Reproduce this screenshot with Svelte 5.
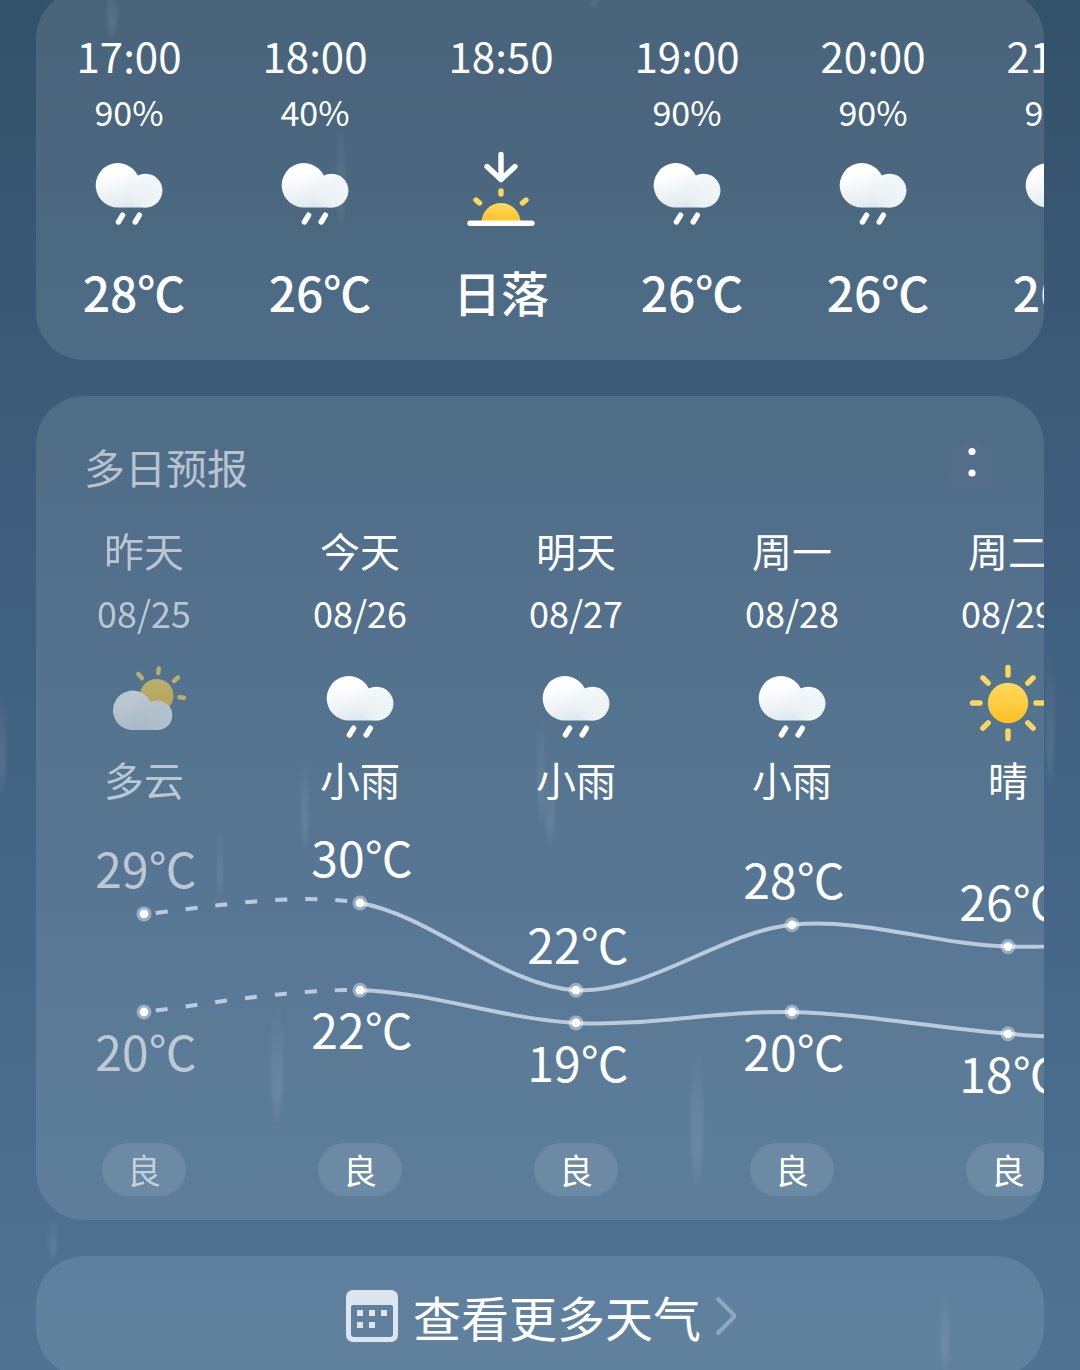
<script>
  const hours = [
    { time: '17:00', rain: '90%', icon: 'rain', label: '28℃' },
    { time: '18:00', rain: '40%', icon: 'rain', label: '26℃' },
    { time: '18:50', rain: '', icon: 'sunset', label: '日落' },
    { time: '19:00', rain: '90%', icon: 'rain', label: '26℃' },
    { time: '20:00', rain: '90%', icon: 'rain', label: '26℃' },
    { time: '21:00', rain: '90%', icon: 'rain', label: '26℃' }
  ];

  const days = [
    { name: '昨天', date: '08/25', icon: 'partly', sky: '多云', high: 29, low: 20, air: '良', past: true },
    { name: '今天', date: '08/26', icon: 'rain', sky: '小雨', high: 30, low: 22, air: '良' },
    { name: '明天', date: '08/27', icon: 'rain', sky: '小雨', high: 22, low: 19, air: '良' },
    { name: '周一', date: '08/28', icon: 'rain', sky: '小雨', high: 28, low: 20, air: '良' },
    { name: '周二', date: '08/29', icon: 'sun', sky: '晴', high: 26, low: 18, air: '良' },
    { name: '周三', date: '08/30', icon: 'sun', sky: '晴', high: 27, low: 17, air: '良' }
  ];

  const COL = 216;
  const CHART_H = 334;
  const peak = Math.max(...days.map((d) => d.high));
  const yOf = (t) => 94 + (peak - t) * 10.9;
  const toPoints = (key) => days.map((d, i) => ({ x: COL * (i + 0.5), y: yOf(d[key]), t: d[key], past: d.past }));

  // Catmull-Rom spline through the points, one cubic segment per pair.
  function segments(pts) {
    return pts.slice(0, -1).map((p, i) => {
      const q = pts[i + 1];
      const before = pts[i - 1] ?? p;
      const after = pts[i + 2] ?? q;
      const c1 = [p.x + (q.x - before.x) / 6, p.y + (q.y - before.y) / 6];
      const c2 = [q.x - (after.x - p.x) / 6, q.y - (after.y - p.y) / 6];
      return { start: `M${p.x} ${p.y}`, curve: `C${c1} ${c2} ${q.x} ${q.y}` };
    });
  }

  function series(key, labelShift) {
    const pts = toPoints(key);
    const segs = segments(pts);
    return {
      pts,
      labelShift,
      dashed: segs[0].start + segs[0].curve,
      solid: segs[1].start + segs.slice(1).map((s) => s.curve).join('')
    };
  }

  const lines = [series('high', -26), series('low', 59)];

  const drops = [
    { x: 112, y: 10, h: 60, w: 10 },
    { x: 594, y: 0, h: 16, w: 8 },
    { x: 341, y: 175, h: 100, w: 9 },
    { x: 541, y: 770, h: 110, w: 8 },
    { x: 550, y: 805, h: 80, w: 10 },
    { x: 305, y: 800, h: 100, w: 8 },
    { x: 220, y: 860, h: 70, w: 6 },
    { x: 277, y: 1060, h: 124, w: 13 },
    { x: 697, y: 1112, h: 150, w: 13 },
    { x: 53, y: 1238, h: 48, w: 8 },
    { x: 945, y: 1330, h: 80, w: 9 },
    { x: 1050, y: 715, h: 140, w: 9 },
    { x: 2, y: 740, h: 110, w: 8 }
  ];
</script>

<svelte:head>
  <title>天气</title>
</svelte:head>

{#snippet weatherIcon(kind)}
  <svg class="icon" viewBox="0 0 90 90" aria-hidden="true">
    {#if kind === 'rain'}
      <path fill="url(#cloud)" d="M33.6 61.5A22.2 22.2 0 1 1 53.9 29.6A16.9 16.9 0 1 1 60.6 61.5Z" />
      <circle cx="60.6" cy="44.8" r="16.8" fill="url(#lobe)" />
      <path class="drop" d="M34.4 76L38.6 69.2M51.2 76L55.4 69.2" />
    {:else if kind === 'sunset'}
      <path class="arrow" d="M45 8.5V33M31 20.5L45 33.5L59 20.5" />
      <path class="ray" d="M45 45V48M20 54L23.5 57M70 54L66.5 57" />
      <path fill="url(#sun)" d="M25.5 76.5a19.5 19.5 0 0 1 39 0Z" />
      <path class="arrow" d="M14 77.3H76" />
    {:else if kind === 'sun'}
      <circle cx="45" cy="44" r="20.2" fill="url(#sun)" />
      {#each [0, 45, 90, 135, 180, 225, 270, 315] as angle}
        <path class="ray" d="M45 8.5V16" transform="rotate({angle} 45 44)" />
      {/each}
    {:else}
      <circle cx="57.7" cy="36.7" r="16.8" fill="url(#sun)" />
      <path class="ray thin" d="M59.8 9.5L59.3 14M39.3 15L43 19.2M79 18.5L75 22M80.5 38.3L85 38.8" />
      <path fill="url(#cloud)" d="M33.7 71A19.7 19.7 0 1 1 51.6 43.1A14.8 14.8 0 1 1 58.3 71Z" />
      <circle cx="58.3" cy="56.2" r="14.7" fill="url(#lobe)" />
    {/if}
  </svg>
{/snippet}

<div class="screen">
  <svg class="rainfall" viewBox="0 0 1080 1370" preserveAspectRatio="xMidYMin slice" aria-hidden="true">
    <defs>
      <linearGradient id="streak" x2="0" y2="1">
        <stop offset="0" stop-color="#fff" stop-opacity="0" />
        <stop offset=".75" stop-color="#cfe4f5" stop-opacity=".1" />
        <stop offset="1" stop-color="#cfe4f5" stop-opacity=".03" />
      </linearGradient>
      <linearGradient id="cloud" x1="0" y1="0" x2=".4" y2="1">
        <stop offset=".3" stop-color="#fff" />
        <stop offset="1" stop-color="#dfe9ee" />
      </linearGradient>
      <linearGradient id="lobe" x1="0" y1=".3" x2="1" y2=".6">
        <stop offset="0" stop-color="#f6f9fa" stop-opacity="0" />
        <stop offset="1" stop-color="#f0f5f7" />
      </linearGradient>
      <linearGradient id="sun" x2="0" y2="1">
        <stop offset="0" stop-color="#ffda60" />
        <stop offset="1" stop-color="#fcc024" />
      </linearGradient>
      <filter id="soften" x="-1" width="3">
        <feGaussianBlur stdDeviation="1.5" />
      </filter>
    </defs>
    {#each drops as d}
      <ellipse cx={d.x} cy={d.y} rx={d.w / 2} ry={d.h / 2} fill="url(#streak)" filter="url(#soften)" />
    {/each}
  </svg>

  <main>
    <section class="card" aria-label="逐时预报">
      <ul class="strip">
        {#each hours as h}
          <li class="hour">
            <time class="clock">{h.time}</time>
            <span class="chance">{h.rain}</span>
            {@render weatherIcon(h.icon)}
            <strong class="reading" class:degrees={h.icon !== 'sunset'}>{h.label}</strong>
          </li>
        {/each}
      </ul>
    </section>

    <section class="card daily" aria-labelledby="daily-title">
      <header>
        <h2 id="daily-title">多日预报</h2>
        <button class="more" type="button" aria-label="更多选项">
          <svg viewBox="0 0 48 48" aria-hidden="true">
            <circle cx="24" cy="9.5" r="3.6" />
            <circle cx="24" cy="31" r="3.6" />
          </svg>
        </button>
      </header>

      <div class="scroller">
        <div class="track">
          <ul class="row">
            {#each days as d}
              <li class="day" class:past={d.past}>
                <span class="name">{d.name}</span>
                <time class="date">{d.date}</time>
                {@render weatherIcon(d.icon)}
                <span class="name">{d.sky}</span>
              </li>
            {/each}
          </ul>

          <svg class="chart" width={COL * days.length} height={CHART_H} role="img" aria-label="气温曲线">
            {#each lines as line}
              <path class="curve dashed" d={line.dashed} />
              <path class="curve" d={line.solid} />
              {#each line.pts as p}
                <circle class="halo" cx={p.x} cy={p.y} r="7.5" />
                <circle class="dot" cx={p.x} cy={p.y} r="4.4" />
                <text class:past={p.past} x={p.x + 2} y={p.y + line.labelShift}>{p.t}℃</text>
              {/each}
            {/each}
          </svg>

          <ul class="row">
            {#each days as d}
              <li class="day" class:past={d.past}><span class="badge"><span>{d.air}</span></span></li>
            {/each}
          </ul>
        </div>
      </div>
    </section>

    <a class="card link" href="#more">
      <svg class="calendar" viewBox="0 0 52 52" aria-hidden="true">
        <path
          fill-rule="evenodd"
          d="M7 0H45A7 7 0 0 1 52 7V45A7 7 0 0 1 45 52H7A7 7 0 0 1 0 45V7A7 7 0 0 1 7 0ZM7 15A2 2 0 0 0 5 17V44A3 3 0 0 0 8 47H44A3 3 0 0 0 47 44V17A2 2 0 0 0 45 15Z"
        />
        <path d="M11 20h6v6h-6zM23 20h6v6h-6zM35 20h6v6h-6zM11 32h6v6h-6zM23 32h6v6h-6z" />
      </svg>
      <span>查看更多天气</span>
      <svg class="chevron" viewBox="0 0 24 42" aria-hidden="true">
        <path d="M4 4L19.5 19.5Q21 21 19.5 22.5L4 38" />
      </svg>
    </a>
  </main>
</div>

<style>
  :global(body) {
    margin: 0;
    background: #4f7191;
  }

  .screen {
    position: relative;
    height: 100vh;
    overflow: hidden auto;
    scrollbar-width: none;
    background: linear-gradient(#34516a, #3c5a78 27%, #446585 62%, #507394);
    color: #fff;
    font-family: 'Noto Sans CJK SC', 'Noto Sans', sans-serif;
  }

  .rainfall {
    position: absolute;
    inset: 0;
    width: 100%;
    height: 100%;
  }

  main {
    position: relative;
    display: flex;
    flex-direction: column;
    gap: 36px;
    margin-top: -10px;
    padding: 0 36px 36px;
  }

  .card {
    overflow: hidden;
    border-radius: 48px;
    background: rgb(240 255 255 / 0.11);
  }

  ul {
    display: flex;
    margin: 0;
    padding: 0;
    list-style: none;
  }

  .strip,
  .scroller {
    overflow-x: auto;
    scrollbar-width: none;
  }

  .hour,
  .day {
    display: flex;
    flex-direction: column;
    align-items: center;
    white-space: nowrap;
  }

  .strip {
    padding: 37px 0;
  }

  .hour {
    flex: 0 0 186px;
  }

  .clock {
    font-size: 42px;
    line-height: 56px;
  }

  .chance {
    height: 58px;
    font-size: 34px;
    line-height: 58px;
  }

  .icon {
    width: 90px;
    height: 90px;
  }

  .hour .icon {
    margin: 5px 0 23px;
  }

  .reading {
    font-size: 48px;
    font-weight: 500;
    line-height: 64px;
  }

  .degrees {
    padding-left: 10px;
  }

  .drop,
  .arrow,
  .ray {
    fill: none;
    stroke: #fff;
    stroke-width: 5.4;
    stroke-linecap: round;
    stroke-linejoin: round;
  }

  .ray {
    stroke: #fdd65a;
  }

  .thin {
    stroke-width: 4.4;
  }

  .daily {
    padding: 40px 0 24px;
  }

  header {
    display: flex;
    align-items: center;
    justify-content: space-between;
    height: 60px;
    margin-bottom: 24px;
    padding: 0 48px;
  }

  h2 {
    margin: 0;
    color: rgb(255 255 255 / 0.6);
    font-size: 41px;
    font-weight: 400;
    line-height: 60px;
  }

  .more {
    width: 48px;
    height: 48px;
    padding: 0;
    border: 0;
    border-radius: 50%;
    background: rgb(255 255 255 / 0.01);
  }

  .more svg {
    display: block;
    fill: #fff;
  }

  .track {
    width: max-content;
  }

  .day {
    flex: 0 0 216px;
  }

  .name {
    font-size: 40px;
    line-height: 60px;
  }

  .date {
    font-size: 36px;
    line-height: 64px;
  }

  .day .icon {
    margin-top: 15px;
  }

  .past .name,
  .past .date,
  .past .icon,
  .past .badge span,
  text.past {
    opacity: 0.6;
  }

  .chart {
    display: block;
  }

  .curve {
    fill: none;
    stroke: #b9cbdd;
    stroke-width: 4;
  }

  .dashed {
    stroke-dasharray: 12 18;
    stroke-dashoffset: -12;
  }

  .halo {
    fill: rgb(255 255 255 / 0.4);
  }

  .dot {
    fill: #fff;
  }

  text {
    fill: #fff;
    font-size: 48px;
    text-anchor: middle;
  }

  .badge {
    padding: 0 25px;
    border-radius: 27px;
    background: rgb(255 255 255 / 0.1);
    font-size: 34px;
    line-height: 53px;
  }

  .link {
    display: flex;
    align-items: center;
    justify-content: center;
    height: 120px;
    padding-left: 4px;
    color: #fff;
    font-size: 48px;
    line-height: 64px;
    text-decoration: none;
  }

  .calendar {
    width: 52px;
    height: 52px;
    margin-right: 15px;
    fill: #dde6ef;
  }

  .chevron {
    width: 24px;
    height: 42px;
    margin-left: 13px;
    fill: none;
    stroke: #8fa8bf;
    stroke-width: 4;
    stroke-linecap: round;
  }
</style>
